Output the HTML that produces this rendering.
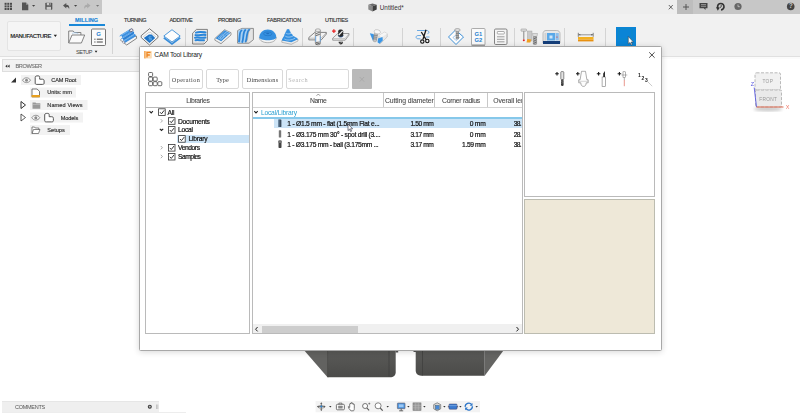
<!DOCTYPE html>
<html><head><meta charset="utf-8"><title>CAM Tool Library</title>
<style>
*{box-sizing:border-box;margin:0;padding:0}
html,body{width:800px;height:414px;overflow:hidden;background:#fff;font-family:"Liberation Sans",sans-serif;}
.a{position:absolute}
.t{position:absolute;white-space:nowrap;line-height:1;color:#333}
#topbar{left:0;top:0;width:800px;height:14px;background:#eeeeee}
#tbl{left:0;top:0;width:102.3px;height:13.8px;background:#c7c7c7}
#tbr{left:677px;top:0;width:123px;height:13.8px;background:#c7c7c7}
#toolbar{left:0;top:14px;width:800px;height:43px;background:#f1f1f1;border-bottom:1px solid #e0e0e0}
#strip{left:0;top:57px;width:800px;height:2px;background:#fbfbfb}
.tab{font-size:5.5px;color:#333;top:17.65px;-webkit-text-stroke:0.15px #3a3a3a}
.sep{position:absolute;width:1px;top:28px;height:18px;background:#d4d4d4}
#browser{left:2px;top:59px;width:138px;height:13px;background:#f2f2f2;border:1px solid #dedede}
.bt{font-size:5.6px;color:#2a2a2a;-webkit-text-stroke:0.15px #3a3a3a}
.bl{position:absolute;height:9px;background:#f1f1f1}
#dlg{left:139px;top:46px;width:523px;height:305px;background:#fff;border:1px solid #a8a8a8;border-radius:1.5px;box-shadow:0 1px 6px rgba(0,0,0,.16)}
.fbtn{position:absolute;top:69px;height:20px;border:1px solid #d9d9d9;border-radius:2px;background:#fff;font-family:"Liberation Serif",serif;font-size:6.2px;color:#444;text-align:center;line-height:20px;}
.panel{position:absolute;border:1px solid #bababa;background:#fff}
.d{font-size:6.7px;color:#111;-webkit-text-stroke:0.2px #111}
.hd{font-size:6.8px;color:#484848;-webkit-text-stroke:0.08px #484848}
.cb{position:absolute;width:7.5px;height:7.5px;border:0.8px solid #333;background:#fff}
</style></head><body>
<div id="wrap" style="position:absolute;left:0;top:0;width:800px;height:414px;filter:blur(0.45px)">
<div id="topbar" class="a"></div><div id="tbl" class="a"></div><div id="tbr" class="a"></div>
<div id="toolbar" class="a"></div><div id="strip" class="a"></div>
<!-- TOP BAR ICONS -->
<svg class="a" style="left:0;top:0" width="800" height="14" viewBox="0 0 800 14">
 <!-- grid -->
 <g fill="#4a4a4a">
  <rect x="4.6" y="2.8" width="2" height="2"/><rect x="7.3" y="2.8" width="2" height="2"/><rect x="10" y="2.8" width="2" height="2"/>
  <rect x="4.6" y="5.4" width="2" height="2"/><rect x="7.3" y="5.4" width="2" height="2"/><rect x="10" y="5.4" width="2" height="2"/>
  <rect x="4.6" y="8" width="2" height="2"/><rect x="7.3" y="8" width="2" height="2"/><rect x="10" y="8" width="2" height="2"/>
 </g>
 <!-- file -->
 <path d="M22 2.4h4l2.3 2.3v5.5H22z" fill="#555"/><path d="M26 2.4v2.3h2.3z" fill="#999"/>
 <path d="M32 5l1.6 1.8L35.200 5z" fill="#444"/>
 <!-- save -->
 <rect x="45.300" y="2.800" width="7" height="7" rx="0.800" fill="#555"/><rect x="46.800" y="2.800" width="4" height="2.500" fill="#c9c9c9"/><rect x="46.600" y="6.800" width="4.400" height="3" fill="#c9c9c9"/><rect x="49.300" y="3" width="1" height="2" fill="#555"/>
 <!-- undo -->
 <path d="M63 5.500l3.300-2.500v1.700c2.500 0 3.500 1.800 2.800 4.500c-0.300-1.700-1.200-2.300-2.800-2.300v1.600z" fill="#555"/>
 <path d="M74 5l1.600 1.800L77.200 5z" fill="#444"/>
 <!-- redo -->
 <path d="M90.500 5.500l-3.300-2.500v1.700c-2.500 0-3.500 1.800-2.800 4.500c0.300-1.700 1.200-2.300 2.800-2.300v1.600z" fill="#aaa"/>
 <path d="M96 5l1.600 1.800L99.200 5z" fill="#777"/>
 <!-- doc cube -->
 <path d="M368.300 4.800l4.200-1.400l4.200 1.400l-4.200 1.500z" fill="#6a6a6a"/><path d="M368.300 4.800l4.200 1.500v5.200l-4.200-2z" fill="#8a8a8a"/><path d="M376.700 4.800l-4.200 1.500v5.200l4.200-2z" fill="#3e3e3e"/>
 <!-- close x -->
 <path d="M668.800 5l4 4.300M672.800 5l-4 4.300" stroke="#444" stroke-width="0.800"/>
 <!-- plus -->
 <rect x="677" y="0" width="16" height="14" fill="#bdbdbd"/>
 <path d="M683 7h6M686 4v6" stroke="#555" stroke-width="1"/>
 <!-- chat -->
 <path d="M699.500 3h8v5.300h-2v1.700l-1.700-1.700h-4.300z" fill="#444"/><path d="M701 4.600h5M701 6.300h5" stroke="#c9c9c9" stroke-width="0.600"/>
 <!-- clock1 -->
 <path d="M718.200 8.600a3.200 3.200 0 1 1 2.800 1.300" fill="none" stroke="#333" stroke-width="1.700"/><path d="M716 7.200l3.800 0.400l-2 3.200z" fill="#333"/><path d="M721.200 4.800v2l-1.300 0.900" stroke="#3a3a3a" stroke-width="0.900" fill="none"/>
 <!-- clock2 -->
 <circle cx="738" cy="6.500" r="3.600" fill="#666"/><path d="M738 4.500v2.200h1.800" stroke="#c9c9c9" stroke-width="0.800" fill="none"/>
 <!-- help -->
 <circle cx="790.700" cy="6.500" r="3.800" fill="#444"/>
</svg>
<div class="t" style="left:379.800px;top:5.100px;font-size:6.300px;color:#333;letter-spacing:0.022px">Untitled*</div>
<div class="t" style="left:788.800px;top:3.300px;font-size:6.500px;color:#c9c9c9;font-weight:bold">?</div>

<!-- TOOLBAR -->
<div class="a" style="left:7px;top:21px;width:53.500px;height:30px;border:1px solid #e4e4e4;border-radius:2px;background:#f5f5f5"></div>
<div class="t" style="left:10.200px;top:33.300px;font-size:6px;font-weight:bold;color:#333;letter-spacing:-0.509px">MANUFACTURE</div>
<div class="t tab" style="left:75px;color:#1a84d6;-webkit-text-stroke-color:#1a84d6;font-weight:bold;letter-spacing:0.091px">MILLING</div>
<div class="a" style="left:69px;top:23.900px;width:35.800px;height:1.900px;background:#1a88d8"></div>
<div class="t tab" style="left:124px;letter-spacing:-0.425px">TURNING</div>
<div class="t tab" style="left:169.5px;letter-spacing:-0.303px">ADDITIVE</div>
<div class="t tab" style="left:218px;letter-spacing:-0.365px">PROBING</div>
<div class="t tab" style="left:267px;letter-spacing:-0.216px">FABRICATION</div>
<div class="t tab" style="left:325px;letter-spacing:-0.314px">UTILITIES</div>
<div class="t" style="left:76px;top:50.200px;font-size:5.500px;color:#444;letter-spacing:-0.476px">SETUP</div>
<div class="sep" style="left:112px;height:26px"></div>
<div class="sep" style="left:185px"></div>
<div class="sep" style="left:302px"></div>
<div class="sep" style="left:353px"></div>
<div class="sep" style="left:402px"></div>
<div class="sep" style="left:440px"></div>
<div class="sep" style="left:514px"></div>
<div class="sep" style="left:564px"></div>
<div class="sep" style="left:605px"></div>
<!-- TOOLBAR ICONS -->
<svg class="a" style="left:0;top:14px" width="800" height="44" viewBox="0 14 800 44">
 <defs>
  <linearGradient id="gb" x1="0" y1="0" x2="0" y2="1"><stop offset="0" stop-color="#4aa3e6"/><stop offset="1" stop-color="#1a6fbe"/></linearGradient>
  <linearGradient id="gg" x1="0" y1="0" x2="0" y2="1"><stop offset="0" stop-color="#f4f4f4"/><stop offset="1" stop-color="#bdbdbd"/></linearGradient>
 </defs>
 <path d="M53.700 34.700h3.300l-1.650 2.300zM94.700 50.700h2.700l-1.350 2z" fill="#222"/>
 <!-- folder -->
 <path d="M68.700 43V31h4.500l1.200 1.500h6.500V35" fill="#f6f6f6" stroke="#777" stroke-width="0.900"/>
 <path d="M68.700 43l3.300-8h12.700l-3.300 8z" fill="#fafafa" stroke="#777" stroke-width="0.900"/>
 <path d="M72.200 33.500c1.500-1 4-1 6 0" stroke="#9bc4ea" stroke-width="0.700" fill="none"/>
 <!-- G doc -->
 <rect x="91.500" y="29" width="14" height="16.500" rx="1" fill="#fbfbfb" stroke="#666" stroke-width="0.900"/>
 <text x="98.600" y="36.300" font-family="Liberation Sans,sans-serif" font-size="6" font-weight="bold" fill="#1e7fcf" text-anchor="middle">G</text>
 <path d="M94.300 39.200h1.200M96.800 39.200h6M94.300 42h1.200M96.800 42h6" stroke="#444" stroke-width="1"/>
 <!-- icon1 tubes -->
 <path d="M120.500 40l6.200 5l10-6.700l-0.400-2.300z" fill="#f4f4f4" stroke="#555" stroke-width="0.700"/>
 <g stroke-linecap="round">
  <path d="M121.200 36.300l9.800-6" stroke="#3b8fe0" stroke-width="3"/><path d="M122.800 38.900l9.900-6" stroke="#2a7fd4" stroke-width="3"/><path d="M124.400 41.500l9.900-6" stroke="#3b8fe0" stroke-width="3"/>
  <path d="M120.800 35.600l9.800-6M122.400 38.200l9.900-6M124 40.800l9.900-6" stroke="#8cc6f6" stroke-width="0.700"/>
 </g>
 <ellipse cx="131.300" cy="30.300" rx="1.700" ry="1.400" transform="rotate(-30 131.300 30.300)" fill="#f2f2f2" stroke="#446" stroke-width="0.700"/>
 <circle cx="121" cy="37.200" r="1.100" fill="#f4f4f4"/><circle cx="122.200" cy="39.800" r="1.100" fill="#f4f4f4"/><circle cx="123.600" cy="42.200" r="1.100" fill="#f4f4f4" stroke="#557" stroke-width="0.400"/>
 <!-- icon2 pocket -->
 <path d="M141.200 35.700l8.300-7l8.500 7v1.800l-8.500 7.500l-8.300-7.500z" fill="#f7f7f7" stroke="#555" stroke-width="0.800"/>
 <path d="M143 37l5.800-4.600h1.600l5.800 4.600" fill="none" stroke="#aaa" stroke-width="0.500"/>
 <path d="M143.800 38.100l5.100-3.500h2.800l3.500 3.500l-5.700 4.800z" fill="#1f74c6"/>
 <path d="M151.500 36.800h-2.500v1.500h2.300v1.600h-2.600" stroke="#6ab4f0" stroke-width="0.800" fill="none"/>
 <!-- icon3 diamond -->
 <path d="M163.800 37.800l8.200 6.200l8.200-6.200" fill="none" stroke="#3a8fdc" stroke-width="1.700"/>
 <path d="M163.800 36l8.200-6.300l8.200 6.300l-8.200 6z" fill="#fdfdfd" stroke="#3b8fd8" stroke-width="0.900"/>
 <!-- icon4 box with blue lines -->
 <path d="M192.600 33.200l3.900-3.800h10.900v11.200l-3.400 3.400h-11.400z" fill="#ebebeb" stroke="#666" stroke-width="0.800"/>
 <path d="M204.200 33v8.500l-1.200 1.500h-9.500" fill="none" stroke="#c4c4c4" stroke-width="0.600"/>
 <path d="M196 32.600c3-1 6-0.600 9.500-0.200M195.500 35.100c3.500 0.800 6.500-0.800 10-0.200M195 37.700c3-0.800 6.500 0.700 10.500-0.100M195.500 40.200c3-0.600 5 0.500 8.500 0" stroke="#2a86da" stroke-width="2" fill="none" stroke-linecap="round"/>
 <!-- icon5 slanted block w/ blue pattern -->
 <path d="M214.900 38.400l9.600-8.700l6.500 3v2.300l-10 8.700l-6.100-3.500z" fill="#f0f0f0" stroke="#777" stroke-width="0.700"/>
 <path d="M215.600 38.300l9-8.100l5.800 2.700l-9.200 8.300z" fill="#2f88da"/>
 <path d="M218.200 38l4.300-3.900l3 1.500l-4.300 3.900zM220 37.800l2.700-2.400l1.200 0.600l-2.700 2.400z" fill="none" stroke="#d4e8fa" stroke-width="0.500"/>
 <path d="M224.600 32l4.800 2.300M225.800 30.900l4.400 2.100M223.500 33l4.800 2.300" stroke="#d4e8fa" stroke-width="0.500"/>
 <!-- icon6 box with curves -->
 <path d="M237.600 43.200V30.600l4.400-2.200h11.400v11.300l-4.400 3.500z" fill="#e4e4e4" stroke="#777" stroke-width="0.800"/>
 <path d="M238 42.800V31l4-2.200h8.500c-2 1.500-2.500 5-3 8.500s-1.500 5.500-3 5.500z" fill="#a8d0f2"/>
 <path d="M239 41.500c1-4 0-9.500 2.500-11M242.300 42c1.500-4 0.500-10 3-12M245.800 41.500c1.500-3.500 0.500-9.500 3.500-11.800" fill="none" stroke="#2a84d8" stroke-width="1.800" stroke-linecap="round"/>
 <path d="M250.500 29c-2.500 2-2 6-2.800 9.500c-0.600 2.500-1.400 4-2.700 4.500" fill="none" stroke="#999" stroke-width="0.500"/>
 <!-- icon7 dome -->
 <path d="M259.300 37.500c0 3 3.800 5.200 8.500 5.200s8.500-2.200 8.500-5.200z" fill="#f4f4f4" stroke="#888" stroke-width="0.600"/>
 <path d="M259.300 37.500c0-4.500 3.800-7.900 8.500-7.900s8.500 3.400 8.500 7.900c0 1.600-3.800 2.700-8.500 2.700s-8.500-1.100-8.500-2.700z" fill="#3590e0"/>
 <ellipse cx="267.800" cy="33.800" rx="4.200" ry="1.900" fill="none" stroke="#1f70c0" stroke-width="0.600"/><ellipse cx="267.800" cy="33.500" rx="1.600" ry="0.700" fill="#1f70c0"/>
 <!-- icon8 stepped cone -->
 <path d="M281.800 40.500v1.800l9.500 2l6.700-3.300v-1.800z" fill="#ededed" stroke="#888" stroke-width="0.500"/>
 <path d="M281.800 40.500l9.500 1.800l6.700-3.100c-1-1.800-3.500-2.400-4.800-3.200c-0.500-1.500-1.500-2.200-2.300-2.800c-0.200-1.200-0.500-1.700-1.200-2.200c0-1.200-0.500-1.900-1.600-1.900s-1.700 0.700-1.700 1.900c-0.800 0.600-1.100 1.300-1.100 2.300c-0.800 0.700-1.200 1.500-1.100 2.800c-1 1-2 2.600-2.400 4.400z" fill="#3590e0"/>
 <path d="M285.300 36.200c1.800 1.400 5.500 1.200 7.800-0.300M286.200 33.300c1.500 1 3.800 0.800 4.900-0.200M284.300 39c2.500 1.500 7.500 1.500 11-1" fill="none" stroke="#cfe5f8" stroke-width="0.600"/>
 <!-- icon9 drill plate -->
 <path d="M308.800 37.500l6-5.100h11.500v1.700l-5 5.800h-12.500z" fill="#f3f3f3" stroke="#666" stroke-width="0.800" stroke-linejoin="round"/>
 <path d="M309 38.200h12.200l5-5.500" fill="none" stroke="#888" stroke-width="0.500"/>
 <rect x="315.300" y="29.500" width="5.200" height="15.300" rx="1.800" fill="url(#gg)" stroke="#777" stroke-width="0.600"/>
 <ellipse cx="317.900" cy="30.200" rx="2.600" ry="1.400" fill="#e8e8e8" stroke="#777" stroke-width="0.500"/>
 <path d="M315.600 33.800l4.600-1.800M315.600 35.800l4.600-1.800M315.600 43l4.600-1.800M315.800 44.600l4-1.500" stroke="#555" stroke-width="0.800"/>
 <rect x="315.600" y="36.200" width="4.600" height="5.400" fill="#f6f6f6"/><path d="M315.700 36v5.800M320.200 36v5.800" stroke="#4a9ae6" stroke-width="0.700"/>
 <!-- icon10 drill plate + -->
 <path d="M332.700 38.200l5.100-4.700h11.200v1.600l-3.800 5.100h-12.500z" fill="#f0f0f0" stroke="#777" stroke-width="0.700" stroke-linejoin="round"/>
 <path d="M332.900 38.600h12.200l3.800-4.800" fill="none" stroke="#999" stroke-width="0.500"/>
 <rect x="338.200" y="29.400" width="5" height="7.600" rx="1.800" fill="#2a2a2a"/>
 <path d="M338.800 35l3.800-4.200" stroke="#f0f0f0" stroke-width="1.200"/>
 <path d="M338.200 35.500c0.500 2 4.500 2 5 0" fill="none" stroke="#24508a" stroke-width="0.800"/>
 <path d="M338.600 41.800h4.400c0 3.600-4.400 3.600-4.400 0z" fill="#2a2a2a"/><path d="M339 43.600l3.500-1.500" stroke="#ccc" stroke-width="0.500"/>
 <path d="M333.900 29.200l0.600 1.300l1.300 0.600l-1.300 0.600l-0.600 1.300l-0.600-1.300l-1.300-0.600l1.300-0.600z" fill="#e82020" stroke="#e82020" stroke-width="0.500"/>
 <!-- icon11 blue block tool -->
 <path d="M379 35.500l5.500-3.300l2.700 1.500v3.300l-6.700 6.500l-2-1.500z" fill="#e8e8e8" stroke="#aaa" stroke-width="0.500"/>
 <path d="M379 35.500l5.500-3.300l2.700 1.500l-5.700 3.500z" fill="#f6f6f6"/>
 <path d="M369.800 33.300l3.700 0.700l2 6l-2.700 0.500z" fill="#3a96e6"/>
 <path d="M378 38.500l4.500-1.500l0.300 3.500l-3.300 3.300l-2-1.500z" fill="#3a96e6"/>
 <path d="M374.300 33.500l-1.200 7.500c0.800 1 2.600 1 3.400 0.200l1.300-7.400z" fill="#c4c4c4" stroke="#777" stroke-width="0.400"/>
 <path d="M373.600 37l3.500 0.300M373.300 38.800l3.500 0.300M373.900 35.200l3.500 0.300" stroke="#666" stroke-width="0.600"/>
 <ellipse cx="377.300" cy="31.800" rx="3.200" ry="2.100" transform="rotate(12 377.300 31.800)" fill="#f8f8f8" stroke="#aaa" stroke-width="0.500"/>
 <!-- scissors -->
 <path d="M417 30.500h9.500c2.800 0 3.200 2.800 1 3.200M421 35.500h-3c-2.800 0.300-2.300 3.300 0 3.300h2.500M426 37h3.500" fill="none" stroke="#4a98e0" stroke-width="0.800"/>
 <path d="M421.300 32l5 7.800M426 29.800l-3 9.500" stroke="#1a1a1a" stroke-width="1.300"/>
 <circle cx="422.300" cy="41.600" r="1.700" fill="none" stroke="#111" stroke-width="1.100"/><circle cx="427.300" cy="41" r="1.700" fill="none" stroke="#111" stroke-width="1.100"/>
 <!-- diamond screw -->
 <path d="M448.500 37l7-7l8 7l-7.500 7.500z" fill="#fcfcfc" stroke="#2a84d2" stroke-width="0.900"/>
 <path d="M453 37.500l3.500-3l3 3l-3.500 3z" fill="none" stroke="#5aa0e0" stroke-width="0.600"/>
 <rect x="456" y="31" width="2.800" height="8" fill="#aaa" stroke="#777" stroke-width="0.400"/>
 <ellipse cx="457.400" cy="30" rx="2.800" ry="1.500" fill="#ddd" stroke="#777" stroke-width="0.500"/>
 <path d="M456 33.500h2.800M456 35.500h2.800M456 37.500h2.800" stroke="#666" stroke-width="0.500"/>
 <!-- G1G2 -->
 <rect x="471.500" y="28.500" width="13.500" height="16.500" rx="0.800" fill="#fafafa" stroke="#999" stroke-width="0.800"/>
 <path d="M471.500 45.300h13.500" stroke="#888" stroke-width="0.900"/>
 <text x="478.300" y="36" font-family="Liberation Sans,sans-serif" font-size="5.800" font-weight="bold" fill="#1e7fcf" text-anchor="middle">G1</text>
 <text x="478.300" y="42" font-family="Liberation Sans,sans-serif" font-size="5.800" font-weight="bold" fill="#1e7fcf" text-anchor="middle">G2</text>
 <!-- doc -->
 <rect x="494.500" y="29" width="12.500" height="15.500" rx="1.200" fill="#f5f5f5" stroke="#777" stroke-width="0.900"/>
 <rect x="497.300" y="31.500" width="7" height="2.500" rx="0.600" fill="#fff" stroke="#777" stroke-width="0.600"/>
 <path d="M497 36.800h7.500M497 39.300h7.500M497 41.800h7.500" stroke="#777" stroke-width="0.700"/>
 <!-- tools -->
 <rect x="521" y="29" width="5.500" height="2.200" rx="0.500" fill="#ddd" stroke="#888" stroke-width="0.500"/>
 <path d="M523.800 31.200v8" stroke="#888" stroke-width="1"/><circle cx="523.800" cy="40.300" r="1" fill="#e02020"/>
 <rect x="527.500" y="31" width="4.500" height="10" fill="#c8c8c8" stroke="#999" stroke-width="0.400"/>
 <path d="M526.500 42.500l0.800-3.500l4 0.500l-1 3z" fill="#f0a020"/>
 <path d="M532.500 33.500h5l-0.500 3h-4z" fill="#ddd" stroke="#888" stroke-width="0.400"/>
 <rect x="533.300" y="36.500" width="3.300" height="8" rx="0.800" fill="#aaa" stroke="#666" stroke-width="0.400"/>
 <path d="M533.500 39l3-1.500M533.500 41.300l3-1.500M533.500 43.500l3-1.500" stroke="#444" stroke-width="0.600"/>
 <!-- machine -->
 <path d="M543 43v-9.500c0-2 1.500-3 3-3h10.500c2 0 3.500 1 3.500 3V43z" fill="#e8e8e8" stroke="#999" stroke-width="0.600"/>
 <rect x="543" y="41" width="17" height="3" fill="#163f7a"/>
 <rect x="547" y="33" width="8" height="7.500" fill="#5aa8e8"/><rect x="549.500" y="35.500" width="3" height="3" fill="#cfe5f8"/>
 <rect x="555.500" y="33" width="3.300" height="7.500" fill="#8fc0ec"/><circle cx="557" cy="37" r="0.600" fill="#e02020"/>
 <rect x="544.500" y="33" width="2" height="7.500" fill="#d0d0d0"/>
 <!-- ruler -->
 <rect x="578" y="37" width="15.500" height="2.600" fill="#f2b020"/><rect x="578" y="39.600" width="15.500" height="1.800" fill="#e89010"/>
 <path d="M578.300 32.800v4M593.200 32.800v4" stroke="#555" stroke-width="0.700"/><path d="M578.500 34.800h14.500" stroke="#555" stroke-width="0.600"/>
 <path d="M578.500 34.800l1.800-0.800v1.600zM593 34.800l-1.800-0.800v1.600z" fill="#555"/>
 <!-- blue button -->
 <rect x="616" y="27" width="20" height="22" fill="#0a84d6"/>
 <rect x="618.500" y="29" width="13.500" height="10" fill="none" stroke="#1a9a9a" stroke-width="0.500" opacity="0.500"/>
 <!-- cursor -->
 <path d="M628.300 36.500v7.500l1.700-1.600l1.200 2.700l1.100-0.500l-1.200-2.600h2.300z" fill="#fff" stroke="#333" stroke-width="0.500"/>
</svg>
<!-- BROWSER -->
<div id="browser" class="a"></div>
<svg class="a" style="left:0;top:58px" width="140" height="82" viewBox="0 58 140 82">
 <path d="M7.300 64.600l-2 1.600l2 1.600zM9.600 64.600l-2 1.600l2 1.600z" fill="#333"/>
 <!-- row1 -->
 <rect x="21" y="75" width="60" height="10" fill="#f2f2f2"/>
 <path d="M16 77.500v5h-5z" fill="#333"/>
 <path d="M22.500 80.200c1.800-3.200 6.200-3.200 8 0c-1.800 3.200-6.200 3.200-8 0z" fill="#f8f8f8" stroke="#7a7a7a" stroke-width="0.800"/><circle cx="26.500" cy="80.200" r="1.500" fill="#8a8a8a"/>
 <path d="M35.200 83v-5.500c0-1.600 1.200-1.600 2.800-1.600c1.400 0 1.700 0.600 1.700 1.800v1.500h2.600c1.300 0 1.800 0.600 1.800 1.800v2c0 1.100-0.600 1.400-1.800 1.400h-5.500c-1.200 0-1.600-0.400-1.600-1.400z" fill="#fff" stroke="#444" stroke-width="0.900"/>
 <!-- row2 -->
 <rect x="30" y="87.500" width="46" height="10" fill="#f2f2f2"/>
 <path d="M32 89h5l2.500 2.300v5.500h-7.500z" fill="#fff" stroke="#555" stroke-width="0.800"/><rect x="31.600" y="95" width="8.300" height="2.300" fill="#e8a020"/>
 <!-- row3 -->
 <rect x="30" y="100" width="57.500" height="10" fill="#f2f2f2"/>
 <path d="M21 101.500l4.500 3.500l-4.500 3.500z" fill="none" stroke="#333" stroke-width="1"/>
 <path d="M32.500 102.500h3l0.800 0.800h4v5.500h-7.800z" fill="#999"/><path d="M32.500 104.500h7.800" stroke="#ccc" stroke-width="0.500"/>
 <!-- row4 -->
 <rect x="30" y="112.500" width="53" height="10" fill="#f2f2f2"/>
 <path d="M21 114l4.500 3.500l-4.500 3.500z" fill="none" stroke="#333" stroke-width="0.800"/>
 <path d="M31.800 117.700c1.800-3.200 6.200-3.200 8 0c-1.800 3.200-6.200 3.200-8 0z" fill="#f8f8f8" stroke="#7a7a7a" stroke-width="0.800"/><circle cx="35.800" cy="117.700" r="1.500" fill="#8a8a8a"/>
 <path d="M44.700 120.500v-5.500c0-1.600 1.200-1.600 2.800-1.600c1.400 0 1.700 0.600 1.700 1.800v1.500h2.400c1.300 0 1.800 0.600 1.800 1.800v2c0 1.100-0.600 1.400-1.800 1.400h-5.300c-1.200 0-1.600-0.400-1.600-1.400z" fill="#fff" stroke="#444" stroke-width="0.900"/>
 <!-- row5 -->
 <rect x="30" y="125" width="40" height="10" fill="#f2f2f2"/>
 <path d="M32 133.500v-6.500h2.500l0.800 1h3.500v1.500M32 133.500l1.500-4h6.500l-1.500 4z" fill="#fff" stroke="#555" stroke-width="0.700"/>
</svg>
<div class="t bt" style="left:15.4px;top:64.2px;color:#777;-webkit-text-stroke-color:#777;letter-spacing:-0.355px">BROWSER</div>
<div class="t bt" style="left:51.2px;top:78.4px;letter-spacing:-0.095px">CAM Root</div>
<div class="t bt" style="left:47.3px;top:89.9px;letter-spacing:-0.079px">Units: mm</div>
<div class="t bt" style="left:47.3px;top:102.5px;letter-spacing:0.084px">Named Views</div>
<div class="t bt" style="left:60.8px;top:115.7px;letter-spacing:-0.118px">Models</div>
<div class="t bt" style="left:47.3px;top:128px;letter-spacing:-0.004px">Setups</div>

<!-- VIEW CUBE -->
<svg class="a" style="left:745px;top:68px" width="55" height="46" viewBox="745 68 55 46">
 <defs><filter id="bl"><feGaussianBlur stdDeviation="1.500"/></filter></defs>
 <ellipse cx="768" cy="109" rx="14" ry="2.500" fill="#ccc" filter="url(#bl)"/>
 <rect x="755" y="72.800" width="25.500" height="17.300" rx="1.500" fill="#f1f1f1" stroke="#aaa" stroke-width="0.800" stroke-dasharray="3 1.500"/>
 <rect x="755.500" y="90" width="26" height="17" rx="1" fill="#eaeaea" stroke="#aaa" stroke-width="0.800" stroke-dasharray="3 1.500"/>
 <path d="M754.200 87.500l2.300 19.500" stroke="#5a5ae0" stroke-width="0.900"/>
 <path d="M756.500 107h27" stroke="#e06a50" stroke-width="1"/>
 <text x="767.800" y="83" font-family="Liberation Sans,sans-serif" font-size="4.800" fill="#999" text-anchor="middle" letter-spacing="0.300">TOP</text>
 <text x="768.300" y="100.500" font-family="Liberation Sans,sans-serif" font-size="4.800" fill="#999" text-anchor="middle" letter-spacing="0.300">FRONT</text>
 <text x="750.800" y="86.200" font-family="Liberation Sans,sans-serif" font-size="5.500" fill="#5a5ae0">Z</text>
 <text x="785.800" y="108.800" font-family="Liberation Sans,sans-serif" font-size="5.500" fill="#f07a6a">X</text>
</svg>

<!-- 3D MODEL -->
<svg class="a" style="left:290px;top:345px" width="230" height="40" viewBox="290 345 230 40">
 <defs>
  <linearGradient id="m1" x1="0" y1="0" x2="0" y2="1"><stop offset="0" stop-color="#5a5a58"/><stop offset="1" stop-color="#4b4b49"/></linearGradient>
 </defs>
 <path d="M304.300 350.500l23.200 26.800h1v-26.800z" fill="#626260"/>
 <path d="M327.500 350.500v26.800h62.500c3.500 0 5.700-2 5.700-5v-21.800z" fill="url(#m1)"/>
 <path d="M395.700 350.500h2.500v2h-2.500z" fill="#555"/>
 <path d="M327.600 351v26" stroke="#444442" stroke-width="0.500"/>
 <path d="M389 351v25.500" stroke="#3e3e3c" stroke-width="0.700"/>
 <path d="M415.700 350.500v20c0 3 2 5.200 5.500 5.200h63.500v-25.200z" fill="url(#m1)"/>
 <path d="M413.500 350.500h2.500v1.500h-2.500z" fill="#555"/>
 <path d="M484.700 350.500v25.200l18.800-25.200z" fill="#646462"/>
 <path d="M422.500 351v24.500" stroke="#3e3e3c" stroke-width="0.700"/>
</svg>

<!-- COMMENTS BAR -->
<div class="a" style="left:2px;top:401px;width:156.500px;height:11px;background:#efefef;border-top:1px solid #e6e6e6"></div>
<div class="a" style="left:2px;top:412px;width:184px;height:1px;background:#ededed"></div>
<div class="t" style="left:15px;top:404.6px;font-size:5.500px;color:#555;letter-spacing:-0.279px">COMMENTS</div>
<svg class="a" style="left:145px;top:400px" width="20" height="12" viewBox="145 400 20 12">
 <circle cx="149.800" cy="406.700" r="2" fill="#333"/><path d="M148.700 406.700h2.200M149.800 405.600v2.200" stroke="#eee" stroke-width="0.600"/>
 <path d="M156.500 404.500v4.500M157.800 404.500v4.500" stroke="#999" stroke-width="0.500"/>
</svg>

<!-- NAV BAR -->
<svg class="a" style="left:312px;top:400px" width="180" height="14" viewBox="312 400 180 14">
 <rect x="315.600" y="401" width="164.400" height="11.300" fill="#f3f3f3"/>
 <g transform="translate(321.300,406.600)">
  <path d="M0-3.600v7.200M-3.600 0h7.200" stroke="#555" stroke-width="0.800"/><ellipse cx="0" cy="0.300" rx="3.300" ry="1.300" fill="none" stroke="#666" stroke-width="0.600"/><circle cx="0" cy="0" r="1" fill="#2a84d2"/>
  <path d="M0-4.300l-1.100 1.500h2.200zM0 4.300l-1.100-1.500h2.200zM-4.300 0l1.500-1.100v2.200zM4.300 0l-1.500-1.100v2.200z" fill="#555"/>
 </g>
 <g transform="translate(340.400,406.800)">
  <rect x="-4" y="-2.500" width="8" height="5.500" rx="1" fill="#f8f8f8" stroke="#555" stroke-width="0.800"/><rect x="-2.200" y="-1.100" width="4.400" height="2.700" rx="0.500" fill="#888"/><path d="M-1.500-2.500v-1.200h3v1.200" stroke="#555" stroke-width="0.700" fill="none"/>
 </g>
 <g transform="translate(351.600,406.800)">
  <path d="M-0.500 4c-1.500-1-2.800-3-2.800-4.200l1.400 0.900v-3.400c0-0.800 1.100-0.800 1.100 0v-0.900c0-0.800 1.200-0.800 1.200 0v0.500c0-0.800 1.200-0.800 1.200 0v0.800c0-0.700 1.100-0.700 1.100 0v4.100c0 1.200-0.500 2.200-0.900 2.200z" fill="#fff" stroke="#444" stroke-width="0.700"/>
 </g>
 <g transform="translate(366.300,406.600)">
  <circle cx="-1.200" cy="-0.600" r="2.500" fill="#fff" stroke="#555" stroke-width="0.800"/><path d="M0.600 1.400l2.200 2.400" stroke="#555" stroke-width="1.100"/><path d="M2-3h2M3-4v2" stroke="#555" stroke-width="0.600"/>
 </g>
 <g transform="translate(378.700,406.600)">
  <circle cx="-0.600" cy="-0.800" r="3" fill="#fff" stroke="#666" stroke-width="0.800"/><path d="M1.600 1.500l2.400 2.600" stroke="#555" stroke-width="1.200"/>
 </g>
 <g transform="translate(401.200,406.600)">
  <rect x="-3.800" y="-3.500" width="7.600" height="5.600" rx="0.500" fill="#4a94e0" stroke="#667" stroke-width="0.700"/><rect x="-2.300" y="-2.200" width="4.600" height="2.800" fill="#9cc8f4"/><path d="M-2 4.200h4M0 2.100v2" stroke="#555" stroke-width="0.900"/>
 </g>
 <g transform="translate(417,406.600)">
  <rect x="-4" y="-3.700" width="8" height="7.400" fill="#9a9a9a" stroke="#777" stroke-width="0.600"/><path d="M-1.300-3.700v7.400M1.300-3.700v7.400M-4-1.200h8M-4 1.200h8" stroke="#c4c4c4" stroke-width="0.400"/>
 </g>
 <g transform="translate(437.200,406.600)">
  <path d="M-3.500-2l3.500-1.800l3.500 1.800v4.200l-3.500 2l-3.500-2z" fill="#d8d8d8" stroke="#555" stroke-width="0.600"/><rect x="-1.800" y="-1.200" width="3.800" height="3.800" fill="#4a8ad8" stroke="#356" stroke-width="0.400"/>
 </g>
 <g transform="translate(453,406.600)">
  <rect x="-4" y="-2.600" width="8" height="5.200" rx="0.800" fill="#3a7ad0" stroke="#446" stroke-width="0.500"/><path d="M-4-1h8" stroke="#9cc4f0" stroke-width="0.500"/><path d="M-4.600-0.800v1.600M4.600-0.800v1.600" stroke="#446" stroke-width="0.800"/>
 </g>
 <g transform="translate(468.800,406.600)">
  <path d="M-3.600 0.300a3.600 3.600 0 0 1 6.400-2.400M3.600-0.300a3.600 3.600 0 0 1-6.400 2.400" fill="none" stroke="#2a74c8" stroke-width="1.300"/><path d="M3.700-3.700v2.800h-2.800zM-3.700 3.700v-2.800h2.800z" fill="#2a74c8"/>
 </g>
 <g fill="#333">
  <path d="M329.100 406l1.200 1.500l1.200-1.500zM386.500 406l1.200 1.500l1.200-1.500zM407.200 406l1.200 1.500l1.200-1.500zM423.200 406l1.200 1.500l1.200-1.500zM443.200 406l1.200 1.500l1.200-1.500zM459.200 406l1.200 1.500l1.200-1.500zM475.500 406l1.200 1.500l1.200-1.500z"/>
 </g>
</svg>
<!-- DIALOG -->
<div id="dlg" class="a"></div>
<svg class="a" style="left:139px;top:46px" width="523" height="45" viewBox="139 46 523 45">
 <!-- F icon -->
 <rect x="144.200" y="51" width="7.600" height="7.400" rx="0.600" fill="#fbdcb4"/>
 <rect x="144.200" y="51" width="1.300" height="7.400" fill="#f3a04a"/>
 <path d="M147 57.600v-5.200h3.600M147 55h2.800" stroke="#ee8420" stroke-width="1.300" fill="none"/>
 <!-- close -->
 <path d="M649.200 52.300l5.400 5.400M654.600 52.300l-5.400 5.400" stroke="#222" stroke-width="0.800"/>
 <!-- grid icon -->
 <g fill="#fff" stroke="#444" stroke-width="0.800">
  <rect x="148.6" y="72.5" width="4" height="4" rx="0.900"/><rect x="148.6" y="77.1" width="4" height="4" rx="0.900"/><rect x="153.2" y="77.1" width="4" height="4" rx="0.900"/><rect x="148.6" y="81.7" width="4" height="4" rx="0.900"/><rect x="153.2" y="81.7" width="4" height="4" rx="0.900"/><rect x="157.8" y="81.7" width="4" height="4" rx="0.900"/>
 </g>
 <!-- tool icons -->
 <g stroke="#1a1a1a" stroke-width="1.100"><path d="M555.200 73.800h3.600M557 72v3.600M576 73.800h3.600M577.800 72v3.600M596.800 73.800h3.600M598.600 72v3.600M617.600 73.800h3.600M619.400 72v3.600"/></g>
 <rect x="560.800" y="71.600" width="3" height="8" rx="0.800" fill="#e4e4e4" stroke="#444" stroke-width="0.600"/><rect x="561" y="79.500" width="2.600" height="6.500" rx="1.200" fill="#3a3a3a"/><path d="M561 81.500l2.600-0.800M561 83.300l2.600-0.800" stroke="#bbb" stroke-width="0.400"/>
 <path d="M581.500 71.300h4l1.400 8.500h1.300v3h-2c0 2-0.800 3.600-2.700 3.600s-2.700-1.600-2.700-3.600h-2.100v-3h1.400z" fill="#fdfdfd" stroke="#777" stroke-width="0.600"/><path d="M579 81.300h9" stroke="#999" stroke-width="0.400"/>
 <rect x="602.100" y="77" width="3.500" height="9.300" fill="#fff" stroke="#777" stroke-width="0.600"/><path d="M603.200 77v-3.500l1.800-2.500v6z" fill="#2a2a2a"/>
 <rect x="623" y="71.800" width="2.600" height="5.800" fill="#fff" stroke="#666" stroke-width="0.500"/><path d="M621.500 75h5.800" stroke="#777" stroke-width="0.500"/><path d="M624.300 77.600v2.500" stroke="#777" stroke-width="0.600"/><path d="M624.300 80v6.200" stroke="#d85040" stroke-width="0.600"/>
 <path d="M648 82l4.200 4.200" stroke="#aaa" stroke-width="0.600"/>
</svg>
<div class="t" style="left:154.3px;top:52.35px;font-size:6.7px;color:#222;letter-spacing:-0.224px">CAM Tool Library</div>
<div class="t" style="left:638px;top:73.40px;font-size:5px;font-weight:bold;color:#222">1</div>
<div class="t" style="left:641.500px;top:75.90px;font-size:5px;font-weight:bold;color:#222">2</div>
<div class="t" style="left:645px;top:78.40px;font-size:5px;font-weight:bold;color:#222">3</div>
<div class="fbtn" style="left:169px;width:34px;letter-spacing:0.406px">Operation</div>
<div class="fbtn" style="left:206px;width:33px;letter-spacing:0.091px">Type</div>
<div class="fbtn" style="left:242px;width:41px;letter-spacing:0.192px">Dimensions</div>
<div class="fbtn" style="left:286px;width:63px;text-align:left;padding-left:1.300px;color:#b4b4b4;letter-spacing:0.501px">Search</div>
<div class="a" style="left:352px;top:69px;width:19.500px;height:20px;background:#b9b9b9;border-radius:1px"></div>
<svg class="a" style="left:352px;top:69px" width="20" height="20" viewBox="352 69 20 20"><path d="M359.700 77l4.400 4.600M364.100 77l-4.400 4.600" stroke="#a4a4a4" stroke-width="0.700"/></svg>

<!-- Libraries panel -->
<div class="panel" style="left:145px;top:92px;width:105px;height:242px"></div>
<div class="a" style="left:146px;top:107px;width:103px;height:1px;background:#b8b8b8"></div>
<div class="t hd" style="left:186.2px;top:97.80px;letter-spacing:-0.292px">Libraries</div>
<div class="a" style="left:177.300px;top:134.800px;width:72px;height:8.300px;background:#cce4f7"></div>
<svg class="a" style="left:146px;top:107px" width="104" height="56" viewBox="146 107 104 56">
 <g fill="none" stroke="#222" stroke-width="1.100">
  <path d="M149.500 111.200l1.700 1.700l1.700-1.700"/>
  <path d="M159.800 128.800l1.700 1.700l1.700-1.700"/>
 </g>
 <g fill="none" stroke="#888" stroke-width="0.700">
  <path d="M160.800 119.200l1.600 1.700l-1.600 1.700"/>
  <path d="M160.800 146l1.600 1.700l-1.600 1.700"/>
  <path d="M160.800 154.800l1.600 1.700l-1.600 1.700"/>
 </g>
 <g fill="#fff" stroke="#333" stroke-width="0.800">
  <rect x="158.600" y="108.800" width="6.600" height="6.600"/>
  <rect x="168.400" y="117.700" width="6.600" height="6.600"/>
  <rect x="168.400" y="126.600" width="6.600" height="6.600"/>
  <rect x="178.600" y="135.600" width="6.600" height="6.600"/>
  <rect x="168.400" y="144.500" width="6.600" height="6.600"/>
  <rect x="168.400" y="153.400" width="6.600" height="6.600"/>
 </g>
 <g fill="none" stroke="#222" stroke-width="0.900">
  <path d="M160 112.200l1.500 1.600l2.700-3.500"/>
  <path d="M169.800 121.100l1.500 1.600l2.700-3.500"/>
  <path d="M169.800 130l1.500 1.600l2.700-3.500"/>
  <path d="M180 139l1.500 1.600l2.700-3.500"/>
  <path d="M169.800 147.900l1.500 1.600l2.700-3.500"/>
  <path d="M169.800 156.800l1.500 1.600l2.700-3.500"/>
 </g>
</svg>
<div class="t d" style="left:167.5px;top:109.75px;letter-spacing:-0.215px">All</div>
<div class="t d" style="left:178px;top:118.75px;letter-spacing:-0.239px">Documents</div>
<div class="t d" style="left:178px;top:127.25px;letter-spacing:-0.222px">Local</div>
<div class="t d" style="left:188.6px;top:136.25px;letter-spacing:-0.254px">Library</div>
<div class="t d" style="left:178px;top:145.35px;letter-spacing:-0.423px">Vendors</div>
<div class="t d" style="left:178px;top:154.35px;letter-spacing:-0.513px">Samples</div>

<!-- Tool list panel -->
<div class="panel" style="left:252px;top:92px;width:271px;height:242px"></div>
<div class="a" style="left:253px;top:107px;width:269px;height:1px;background:#d4d4d4"></div>
<div class="a" style="left:383px;top:93px;width:1px;height:14px;background:#c8c8c8"></div>
<div class="a" style="left:434px;top:93px;width:1px;height:14px;background:#c8c8c8"></div>
<div class="a" style="left:487px;top:93px;width:1px;height:14px;background:#c8c8c8"></div>
<svg class="a" style="left:253px;top:93px" width="130" height="30" viewBox="253 93 130 30">
 <path d="M316.500 95.800l1.800-1.800l1.800 1.800" fill="none" stroke="#555" stroke-width="0.600"/>
 <path d="M254.300 111.200l1.700 1.700l1.700-1.700" fill="none" stroke="#222" stroke-width="1.100"/>
</svg>
<div class="t hd" style="left:309.9px;top:98.20px;color:#444;letter-spacing:-0.383px">Name</div>
<div class="t hd" style="left:384.9px;top:97.90px;letter-spacing:-0.063px">Cutting diameter</div>
<div class="t hd" style="left:442px;top:97.90px;letter-spacing:-0.255px">Corner radius</div>
<div class="t hd" style="left:493.3px;top:97.90px;width:28.5px;overflow:hidden"><span style="letter-spacing:-0.107px">Overall le</span><span style="letter-spacing:-0.3px">ngth</span></div>
<div class="t" style="left:260.9px;top:109.55px;font-size:6.7px;color:#2a9fd0;letter-spacing:-0.184px">Local/Library</div>
<div class="a" style="left:253px;top:117.200px;width:269px;height:1.600px;background:#86c8ea"></div>
<div class="a" style="left:273.500px;top:119px;width:248.500px;height:9px;background:#cce4f7"></div>
<svg class="a" style="left:275.700px;top:118px" width="10" height="32" viewBox="275 118 10 32">
 <rect x="277.400" y="119.500" width="3" height="7.500" rx="0.500" fill="#3a4a5a"/><rect x="277.400" y="119.500" width="1" height="7.500" fill="#6a8aa8"/>
 <rect x="277.800" y="130.300" width="2.400" height="7.200" rx="0.500" fill="#777"/>
 <rect x="277.500" y="140.500" width="3" height="7.500" rx="0.800" fill="#444"/><rect x="277.500" y="140.500" width="3" height="2.500" fill="#777"/>
</svg>
<div class="t d" style="left:287.3px;top:121.15px;letter-spacing:-0.247px">1 - Ø1.5 mm - flat (1.5mm Flat e...</div>
<div class="t d" style="left:287.3px;top:131.65px;letter-spacing:-0.262px">1 - Ø3.175 mm 30° - spot drill (3....</div>
<div class="t d" style="left:287.3px;top:142.15px;letter-spacing:-0.279px">1 - Ø3.175 mm - ball (3.175mm ...</div>
<div class="t d" style="left:410.6px;top:121.15px;letter-spacing:-0.464px">1.50 mm</div>
<div class="t d" style="left:469.8px;top:121.15px;letter-spacing:-0.262px">0 mm</div>
<div class="t d" style="left:513.8px;top:121.15px;width:7.9px;overflow:hidden;letter-spacing:-0.8px">38.</div>
<div class="t d" style="left:410.6px;top:131.65px;letter-spacing:-0.464px">3.17 mm</div>
<div class="t d" style="left:469.8px;top:131.65px;letter-spacing:-0.262px">0 mm</div>
<div class="t d" style="left:513.8px;top:131.65px;width:7.9px;overflow:hidden;letter-spacing:-0.8px">28.</div>
<div class="t d" style="left:410.6px;top:142.15px;letter-spacing:-0.464px">3.17 mm</div>
<div class="t d" style="left:462.1px;top:142.15px;letter-spacing:-0.387px">1.59 mm</div>
<div class="t d" style="left:513.8px;top:142.15px;width:7.9px;overflow:hidden;letter-spacing:-0.8px">38.</div>
<!-- scrollbar -->
<div class="a" style="left:253px;top:324px;width:269px;height:9px;background:#f0f0f0"></div>
<div class="a" style="left:261.500px;top:325.500px;width:96px;height:7.500px;background:#cdcdcd"></div>
<svg class="a" style="left:253px;top:324px" width="269" height="10" viewBox="253 324 269 10">
 <path d="M257.600 327l-2 2.200l2 2.200M516.500 327l2 2.200l-2 2.200" fill="none" stroke="#222" stroke-width="1"/>
</svg>
<!-- cursor -->
<svg class="a" style="left:345px;top:120px" width="12" height="14" viewBox="345 120 12 14">
 <path d="M348 124v6.600l1.500-1.400l1.100 2.400l1-0.400l-1.100-2.400h2.100z" fill="#fff" stroke="#223" stroke-width="0.600"/>
</svg>
<!-- Right panels -->
<div class="panel" style="left:524px;top:92px;width:131px;height:105px"></div>
<div class="panel" style="left:524px;top:199px;width:131px;height:135px;background:#eee8d8;border-color:#bcbcb0"></div>

</div>
</body></html>
